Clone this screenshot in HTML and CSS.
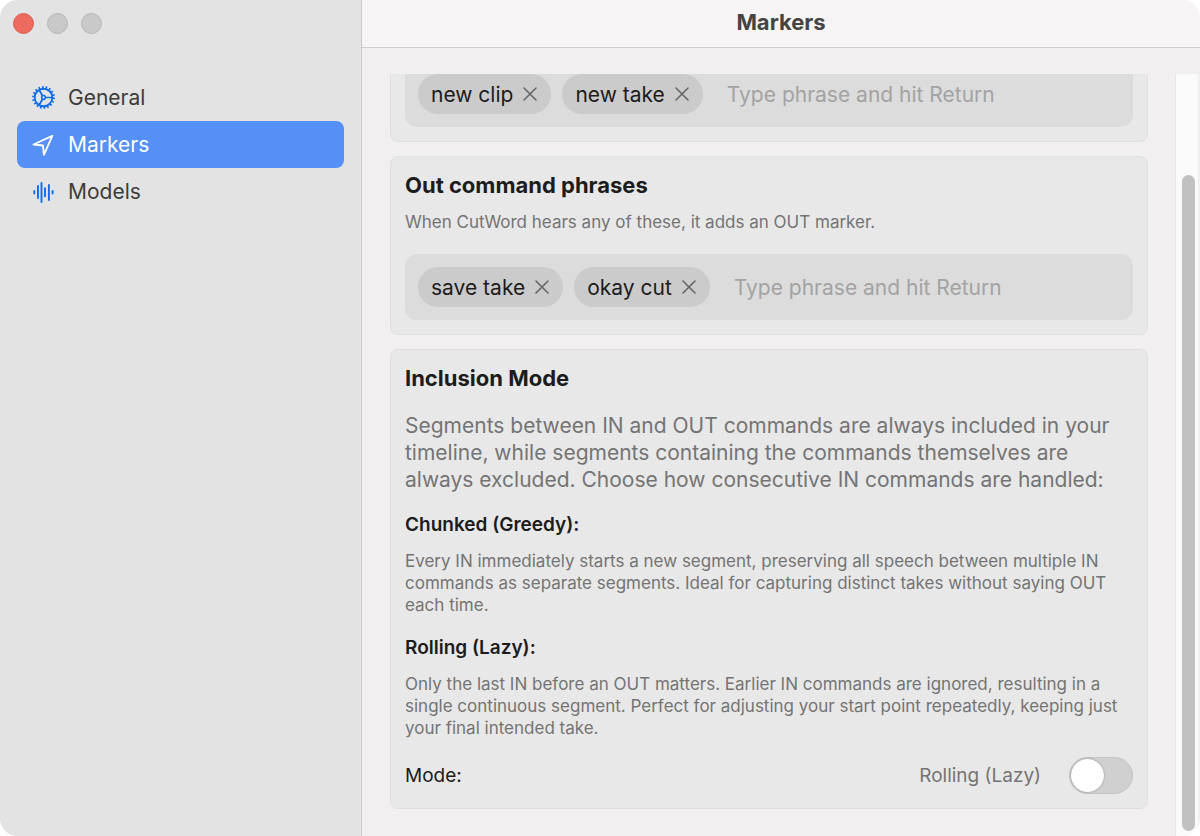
FILE: index.html
```html
<!DOCTYPE html>
<html lang="en">
<head>
  <meta charset="UTF-8">
  <meta name="viewport" content="width=device-width, initial-scale=1.0">
  <title>Markers</title>
  <link rel="stylesheet" href="styles.css">
</head>
<body>
  <div class="window">
    <aside class="sidebar">
      <div class="lights">
        <button class="light close" type="button" aria-label="Close"></button>
        <button class="light" type="button" aria-label="Minimize"></button>
        <button class="light" type="button" aria-label="Zoom"></button>
      </div>

      <nav class="nav">
        <a class="nav-item" href="#general">
          <svg class="icon" viewBox="0 0 24 24" fill="none" stroke="currentColor">
            <circle cx="11.5" cy="11.5" r="8.8" stroke-width="1.9"/>
            <circle cx="11.5" cy="11.5" r="10.4" stroke-width="2" stroke-dasharray="1.6 2.03"/>
            <circle cx="11.5" cy="11.5" r="1.9" stroke-width="1.5"/>
            <path d="M13.4 11.5h7.500M10.5 9.800 7 3.800M10.5 13.2 7 19.2" stroke-width="1.7"/>
          </svg>
          General
        </a>
        <a class="nav-item active" href="#markers" aria-current="page">
          <svg class="icon" viewBox="0 0 24 24" fill="none" stroke="currentColor" stroke-width="1.8" stroke-linejoin="round">
            <path d="M20.3 2.9 1.5 11.5 11 12.5 11.9 21.9z"/>
          </svg>
          Markers
        </a>
        <a class="nav-item" href="#models">
          <svg class="icon" viewBox="0 0 24 24" fill="none" stroke="currentColor" stroke-width="1.9" stroke-linecap="round">
            <path d="M2.3 11v2.5M6 6v12M9.5 3v19M13 8.2v8M16.9 5v15M20.6 11v2.5"/>
          </svg>
          Models
        </a>
      </nav>
    </aside>

    <main class="main">
      <header class="titlebar">
        <h1>Markers</h1>
      </header>

      <div class="body">
        <div class="scroller">
          <div class="cards">
            <section class="card">
              <div class="phrases">
                <span class="chip">new clip
                  <button class="remove" type="button" aria-label="Remove new clip"><svg viewBox="0 0 14 14"><path d="M1 1l12 12M13 1 1 13"/></svg></button>
                </span>
                <span class="chip">new take
                  <button class="remove" type="button" aria-label="Remove new take"><svg viewBox="0 0 14 14"><path d="M1 1l12 12M13 1 1 13"/></svg></button>
                </span>
                <input type="text" placeholder="Type phrase and hit Return" aria-label="Add in phrase">
              </div>
            </section>

            <section class="card">
              <h2>Out command phrases</h2>
              <p class="caption hint">When CutWord hears any of these, it adds an OUT marker.</p>
              <div class="phrases">
                <span class="chip">save take
                  <button class="remove" type="button" aria-label="Remove save take"><svg viewBox="0 0 14 14"><path d="M1 1l12 12M13 1 1 13"/></svg></button>
                </span>
                <span class="chip">okay cut
                  <button class="remove" type="button" aria-label="Remove okay cut"><svg viewBox="0 0 14 14"><path d="M1 1l12 12M13 1 1 13"/></svg></button>
                </span>
                <input type="text" placeholder="Type phrase and hit Return" aria-label="Add out phrase">
              </div>
            </section>

            <section class="card">
              <h2>Inclusion Mode</h2>
              <p class="intro">Segments between IN and OUT commands are always included in your timeline, while segments containing the commands themselves are always excluded. Choose how consecutive IN commands are handled:</p>

              <h3>Chunked (Greedy):</h3>
              <p class="caption">Every IN immediately starts a new segment, preserving all speech between multiple IN commands as separate segments. Ideal for capturing distinct takes without saying OUT each time.</p>

              <h3>Rolling (Lazy):</h3>
              <p class="caption">Only the last IN before an OUT matters. Earlier IN commands are ignored, resulting in a single continuous segment. Perfect for adjusting your start point repeatedly, keeping just your final intended take.</p>

              <div class="mode">
                <label for="mode">Mode:</label>
                <span class="mode-value">Rolling (Lazy)</span>
                <input class="switch" type="checkbox" role="switch" id="mode">
              </div>
            </section>
          </div>
        </div>
        <div class="scrollbar"><div class="thumb"></div></div>
      </div>
    </main>
  </div>
</body>
</html>
```
FILE: styles.css
```css
* {
  box-sizing: border-box;
}

body {
  margin: 0;
  background: #fff;
  font-family: Inter, 'Liberation Sans', sans-serif;
  font-size: 21px;
  color: #1c1c1c;
}

h1, h2, h3, p {
  margin: 0;
}

button, input {
  font: inherit;
  color: inherit;
}

.window {
  display: flex;
  height: 100vh;
  border-radius: 18px;
  overflow: hidden;
  background: #f1eff0;
}

/* sidebar */
.sidebar {
  flex: 0 0 362px;
  padding: 13px 17px;
  background: #e3e3e3;
  border-right: 1px solid #cdcdcd;
}

.lights {
  display: flex;
  gap: 13px;
  margin: 0 -4px 40px;
}

.light {
  width: 21px;
  height: 21px;
  padding: 0;
  border: 1px solid #b5b5b5;
  border-radius: 50%;
  background: #c9c9c9;
}

.light.close {
  background: #ed6a5f;
  border-color: #d95b50;
}

.nav-item {
  display: flex;
  align-items: center;
  gap: 12px;
  height: 47px;
  padding: 0 15px;
  border-radius: 8px;
  color: #3c3c3c;
  text-decoration: none;
}

.nav-item.active {
  background: #5490f5;
  color: #fff;
}

.icon {
  width: 24px;
  height: 24px;
  color: #0f6be8;
}

.active .icon {
  color: #fff;
}

/* main pane */
.main {
  flex: 1;
  min-width: 0;
  display: flex;
  flex-direction: column;
}

.titlebar {
  height: 48px;
  background: #f6f4f5;
  border-bottom: 1px solid #cfcdce;
  text-align: center;
}

.titlebar h1 {
  font-size: 22px;
  line-height: 45px;
  font-weight: 700;
  color: #444;
}

.body {
  flex: 1;
  min-height: 0;
  display: flex;
  padding: 26px 2px 0 0;
}

/* column-reverse keeps the list scrolled to its end */
.scroller {
  flex: 1;
  min-width: 0;
  display: flex;
  flex-direction: column-reverse;
  overflow-y: auto;
  scrollbar-width: none;
}

.cards {
  display: flex;
  flex-direction: column;
  gap: 14px;
  padding: 0 27px 27px 28px;
}

.card {
  padding: 14px;
  background: #e8e8e8;
  border: 1px solid #dfdfdf;
  border-radius: 8px;
}

h2 {
  font-size: 22px;
  line-height: 28px;
  font-weight: 700;
}

h3 {
  font-size: 19px;
  line-height: 24px;
  font-weight: 600;
  margin: 20px 0 13px;
}

.caption {
  font-size: 17px;
  line-height: 22px;
  color: #747474;
}

.hint {
  margin: 12px 0 21px;
}

.intro {
  margin-top: 20px;
  line-height: 27px;
  color: #747474;
}

.phrases {
  display: flex;
  align-items: center;
  gap: 11px;
  padding: 13px;
  background: #dcdcdc;
  border-radius: 12px;
}

.chip {
  display: flex;
  align-items: center;
  gap: 10px;
  height: 40px;
  padding: 0 14px 0 13px;
  border-radius: 20px;
  background: #cbcbcb;
  white-space: nowrap;
}

.remove {
  display: flex;
  padding: 0;
  border: 0;
  background: none;
}

.remove svg {
  width: 14px;
  height: 14px;
  fill: none;
  stroke: #666;
  stroke-width: 1.6;
  stroke-linecap: round;
}

.phrases input {
  flex: 1;
  min-width: 0;
  padding: 0 13px;
  border: 0;
  outline: 0;
  background: none;
}

.phrases input::placeholder {
  color: #a3a3a3;
}

.mode {
  display: flex;
  align-items: center;
  margin-top: 18px;
  font-size: 19px;
}

.mode-value {
  margin-left: auto;
  color: #747474;
}

.switch {
  appearance: none;
  display: flex;
  width: 64px;
  height: 37px;
  margin: 0 0 0 28px;
  padding: 1px;
  border: 1px solid #c4c4c4;
  border-radius: 19px;
  background: #d0d0d0;
}

.switch::before {
  content: "";
  width: 33px;
  height: 33px;
  border-radius: 50%;
  background: #fff;
  box-shadow: 0 0 2px rgba(0, 0, 0, 0.4);
}

.switch:checked {
  justify-content: flex-end;
  background: #5490f5;
}

/* scrollbar */
.scrollbar {
  display: flex;
  flex-direction: column;
  width: 23px;
  padding: 101px 3px 5px 6px;
  background: #fafafa;
  border-left: 1px solid #e6e6e6;
}

.thumb {
  flex: 1;
  border-radius: 7px;
  background: #c1c1c1;
}
```
